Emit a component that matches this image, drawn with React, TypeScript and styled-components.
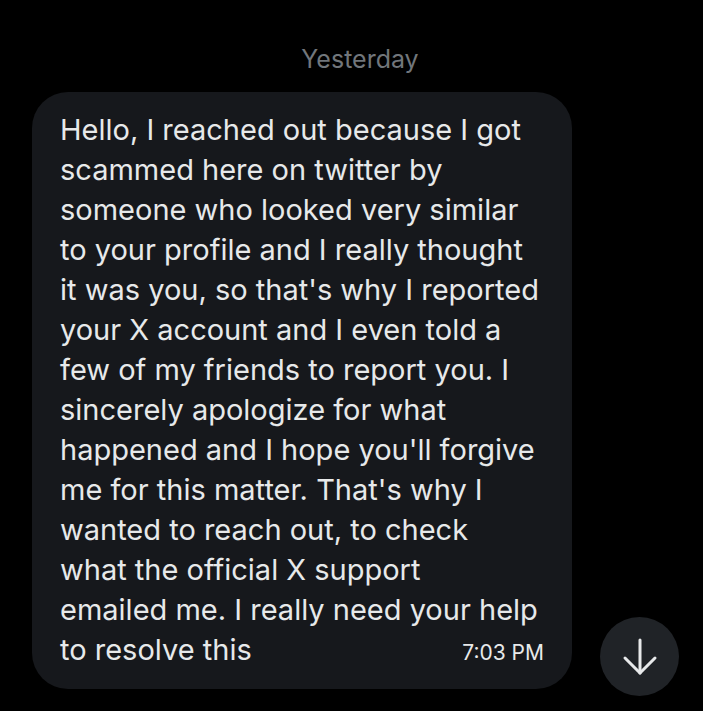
import React from 'react';
import styled, { createGlobalStyle } from 'styled-components';

const GlobalStyle = createGlobalStyle`
  html, body {
    margin: 0;
    padding: 0;
    background: #000000;
  }
  body {
    font-family: Inter, "Liberation Sans", sans-serif;
    -webkit-font-smoothing: antialiased;
  }
`;

const Screen = styled.div`
  width: 703px;
  height: 711px;
  background: #000000;
  display: flex;
  flex-direction: column;
  box-sizing: border-box;
  padding: 43px 0 0 32px;
  overflow: hidden;
`;

const DayLabel = styled.div`
  color: #71767b;
  font-size: 25px;
  line-height: 32px;
  text-align: center;
  width: 656px;
  margin-bottom: 17px;
`;

const Row = styled.div`
  display: flex;
  align-items: flex-end;
  gap: 28px;
`;

const Bubble = styled.div`
  width: 540px;
  box-sizing: border-box;
  background: #16181c;
  border-radius: 36px;
  padding: 18px 28px 16px 28px;
  color: #e7e9ea;
  font-size: 29px;
  line-height: 40px;
`;

const Line = styled.div`
  white-space: nowrap;
`;

const LastLine = styled.div`
  display: flex;
  justify-content: space-between;
  align-items: baseline;
`;

const Time = styled.span`
  font-size: 21px;
  color: #e7e9ea;
`;

const ScrollButton = styled.button`
  width: 79px;
  height: 79px;
  border-radius: 50%;
  border: none;
  background: #202327;
  display: flex;
  align-items: center;
  justify-content: center;
  padding: 0;
  margin-bottom: -7px;
  cursor: pointer;
`;

const lines = [
  'Hello, I reached out because I got',
  'scammed here on twitter by',
  'someone who looked very similar',
  'to your profile and I really thought',
  "it was you, so that's why I reported",
  'your X account and I even told a',
  'few of my friends to report you. I',
  'sincerely apologize for what',
  "happened and I hope you'll forgive",
  "me for this matter. That's why I",
  'wanted to reach out, to check',
  'what the official X support',
  'emailed me. I really need your help',
];

export default function App() {
  return (
    <>
      <GlobalStyle />
      <Screen>
        <DayLabel>Yesterday</DayLabel>
        <Row>
          <Bubble>
            {lines.map((l) => (
              <Line key={l}>{l}</Line>
            ))}
            <LastLine>
              <span>to resolve this</span>
              <Time>7:03 PM</Time>
            </LastLine>
          </Bubble>
          <ScrollButton aria-label="Scroll to bottom">
            <svg width="48" height="48" viewBox="0 0 24 24" fill="none" stroke="#e7e9ea" strokeWidth="1.5" strokeLinecap="round" strokeLinejoin="round">
              <path d="M12 3.5v16.5" />
              <path d="M4.5 12.5l7.5 7.5 7.5-7.5" />
            </svg>
          </ScrollButton>
        </Row>
      </Screen>
    </>
  );
}
